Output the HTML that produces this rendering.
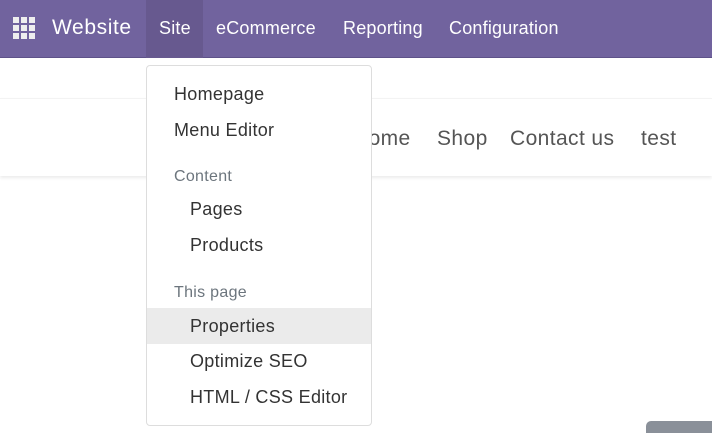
<!DOCTYPE html>
<html><head><style>
*{margin:0;padding:0;box-sizing:border-box}
body{width:712px;height:430px;overflow:hidden;background:#fff;font-family:"Liberation Sans",sans-serif;position:relative}
.nav{position:absolute;left:0;top:0;width:712px;height:58px;background:#71639e;color:#fff;border-bottom:1px solid #5e5289}
.nav span{position:absolute;top:18px;font-size:18px;letter-spacing:0.2px}
.act{position:absolute;left:146px;top:0;width:57px;height:58px;background:#67598f}
.grid{position:absolute;left:13px;top:17px;width:23px;height:23px}
.grid i{position:absolute;width:6px;height:6px;background:#eee}
.band{position:absolute;left:0;top:98px;width:712px;height:78px;background:#fff;border-top:1px solid #f3f3f3;box-shadow:0 2px 3px rgba(0,0,0,.08)}
.band span{position:absolute;top:28px;font-size:21px;color:#555;letter-spacing:0.4px}
.dd{position:absolute;left:146px;top:65px;width:226px;height:361px;background:#fff;border:1px solid #ddd;border-radius:4px}
.dd div{position:absolute;left:0;width:224px;height:36px;font-size:18px;color:#333;line-height:36px;letter-spacing:0.3px}
.dd .h{font-size:16px;color:#6c757d}
.grey{position:absolute;left:646px;top:421px;width:70px;height:12px;background:#8a9099;border-radius:5px 0 0 0}
</style></head><body>
<div class="nav">
<div class="act"></div>
<div class="grid"><i style="left:0;top:0"></i><i style="left:8px;top:0"></i><i style="left:16px;top:0"></i><i style="left:0;top:8px"></i><i style="left:8px;top:8px"></i><i style="left:16px;top:8px"></i><i style="left:0;top:16px"></i><i style="left:8px;top:16px"></i><i style="left:16px;top:16px"></i></div>
<span style="left:52px;font-size:21px;top:16px;letter-spacing:0.6px">Website</span>
<span style="left:159px">Site</span>
<span style="left:216px">eCommerce</span>
<span style="left:343px">Reporting</span>
<span style="left:449px">Configuration</span>
</div>
<div class="band">
<span style="left:353px">Home</span>
<span style="left:437px">Shop</span>
<span style="left:510px">Contact us</span>
<span style="left:641px">test</span>
</div>
<div class="dd">
<div style="top:10px;padding-left:27px">Homepage</div>
<div style="top:46px;padding-left:27px">Menu Editor</div>
<div class="h" style="top:93px;padding-left:27px">Content</div>
<div style="top:125px;padding-left:43px">Pages</div>
<div style="top:161px;padding-left:43px">Products</div>
<div class="h" style="top:209px;padding-left:27px">This page</div>
<div style="top:242px;padding-left:43px;background:#ebebeb">Properties</div>
<div style="top:277px;padding-left:43px">Optimize SEO</div>
<div style="top:313px;padding-left:43px">HTML / CSS Editor</div>
</div>
<div class="grey"></div>
</body></html>
